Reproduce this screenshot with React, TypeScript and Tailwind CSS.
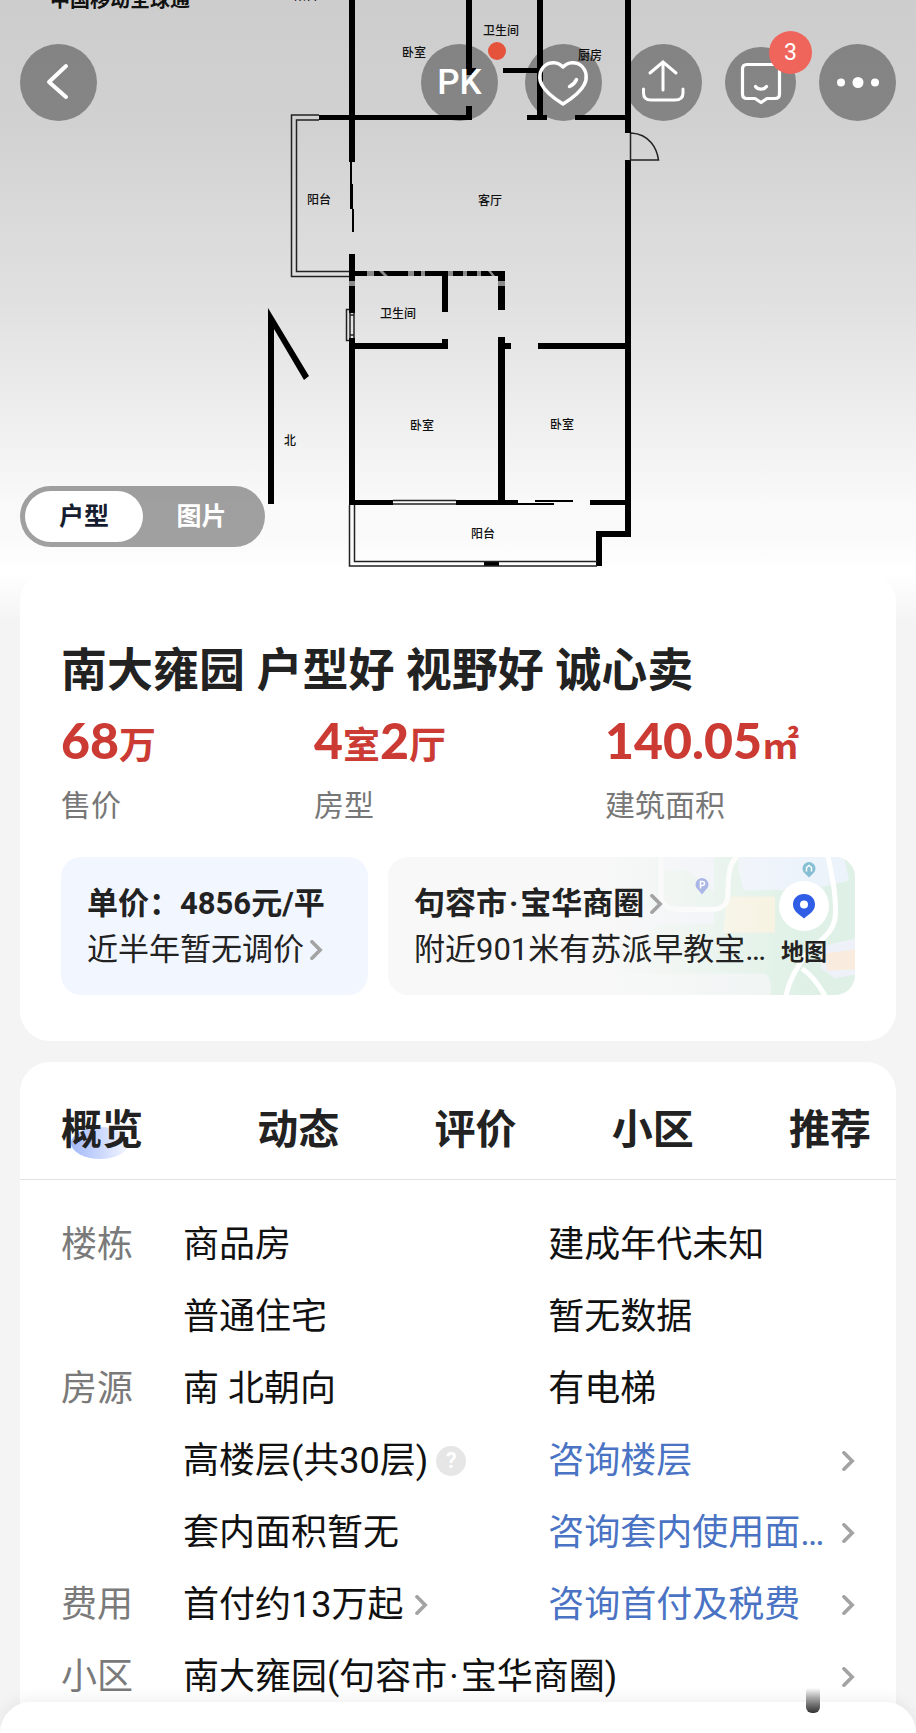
import type { ReactNode } from 'react';

const STATS = [
  { label: '售价', parts: ['68', '万'] },
  { label: '房型', parts: ['4', '室', '2', '厅'] },
  { label: '建筑面积', parts: ['140.05', '㎡'] },
];

const TABS = ['概览', '动态', '评价', '小区', '推荐'];

const ROOM_LABELS = [
  { x: 306, y: 0, text: '阳台' },
  { x: 414, y: 57, text: '卧室' },
  { x: 501, y: 35, text: '卫生间' },
  { x: 590, y: 60, text: '厨房' },
  { x: 319, y: 204, text: '阳台' },
  { x: 490, y: 205, text: '客厅' },
  { x: 398, y: 318, text: '卫生间' },
  { x: 422, y: 430, text: '卧室' },
  { x: 562, y: 429, text: '卧室' },
  { x: 483, y: 538, text: '阳台' },
  { x: 290, y: 445, text: '北' },
];

function Chevron() {
  return (
    <svg viewBox="0 0 14 22" className="w-[13px] h-5 shrink-0" fill="none" stroke="#a3a3a3" strokeWidth="4">
      <path d="M2 2l9 9-9 9" strokeLinecap="round" />
    </svg>
  );
}

function RoundButton({ label, children }: { label: string; children: ReactNode }) {
  return (
    <button aria-label={label} className="relative w-[77px] h-[77px] shrink-0 rounded-full bg-black/36 text-white">
      {children}
    </button>
  );
}

function FloorPlan() {
  return (
    <svg viewBox="0 0 916 572" className="block w-full" role="img" aria-label="户型图">
      {/* solid walls */}
      <path
        d="M349 0h6v162h-6z M349 254h6v59h-6z M349 338h6v167h-6z
           M319 115h153v5H319z M466 0h6v75h-6z M466 68h10v5h-10z M466 106h6v14h-6z
           M537 0h6v120h-6z M503 68h36v5h-36z M527 115h20v5h-20z M575 115h52v5h-52z
           M625 0h6v133h-6z M625 160h6v377h-6z
           M350 271h155v5H350z M442 271h6v41h-6z M442 339h6v10h-6z M354 343h94v6h-94z
           M498 271h7v39h-7z M498 337h7v168h-7z M504 343h7v6h-7z M538 343h88v6h-88z
           M349 500h44v5h-44z M456 500h62v5h-62z M518 503h36v2h-36z M535 500h38v2h-38z
           M590 500h36v5h-36z M596 531h35v6h-35z M596 531h6v35h-6z M484 561h15v5h-15z
           M350 162h2v22h-2z M350 184h3v25h-3z M352 209h2v23h-2z
           M268 308L309 376L304 380L274 329V504H268z"
      />
      {/* windows, balconies and the entrance door */}
      <g fill="none" stroke="#222" strokeWidth="1.500">
        <path d="M349 276.500H291.500V115H319 M349 271.500H296.500V120H319" />
        <path d="M349.500 505V566H597 M354.500 505V561.500H597" />
        <path d="M393 500.500h63 M393 504h63" />
        <path d="M349 309.500h-2.500v31h2.500 M350 313v25 M354 313v25 M350 315h4 M350 335h4" />
        <path d="M630.500 133V160H658.500C657 149 650 134 631 133" />
      </g>
      {/* worn spots of the watermark over the bathroom wall */}
      <path d="M367 271h7v5h-7z M379 271l4 0 5 5h-4z M408 271h6v5h-6z M421 271h4v5h-4z M448 271h5v5h-5z M463 271h4v5h-4z M477 271h4v5h-4z M488 271h3l4 5h-3z M349 281h6v5h-6z M498 281h7v5h-7z" fill="#8a8a8a" />
      <g fontSize="12" fontWeight="500" textAnchor="middle" fill="#111">
        {ROOM_LABELS.map(room => (
          <text key={`${room.x}-${room.y}`} x={room.x} y={room.y}>
            {room.text}
          </text>
        ))}
      </g>
    </svg>
  );
}

function Toolbar() {
  return (
    <div className="absolute inset-x-0 top-11 px-5 flex items-center justify-between">
      <RoundButton label="返回">
        <svg viewBox="0 0 77 77" fill="none" stroke="white" strokeWidth="4" strokeLinecap="round" strokeLinejoin="round">
          <path d="M46 22L29 38L46 53" />
        </svg>
      </RoundButton>

      <div className="flex items-center gap-[23px]">
        <div className="relative mr-1">
          <RoundButton label="对比">
            <span className="text-[35px] leading-[77px] font-medium">PK</span>
          </RoundButton>
          <span className="absolute -right-2 -top-0.5 w-[18px] h-[18px] rounded-full bg-[#e5533b]" />
        </div>
        <RoundButton label="收藏">
          <svg viewBox="0 0 77 77" fill="none" stroke="white" strokeWidth="3.500" strokeLinecap="round" strokeLinejoin="round">
            <path d="M38 23C33 17.500 25 17.500 20 21.500C14 26.500 13.500 35 17 41C21 49 30 55 38 60C46 55 55 49 59 41C62.500 35 62 26.500 56 21.500C51 17.500 43 17.500 38 23Z" />
            <path d="M44.500 42.500C48 41 50 39 51.500 35.500" />
          </svg>
        </RoundButton>
        <RoundButton label="分享">
          <svg viewBox="0 0 77 77" fill="none" stroke="white" strokeWidth="3" strokeLinecap="round">
            <path d="M38 46V19M25 29L38 18L51 29" />
            <path d="M18.500 45V49C18.500 53.500 21 56 26 56H50C55 56 58 53.500 58 49V45" />
          </svg>
        </RoundButton>
        <button aria-label="消息" className="relative w-[71px] h-[71px] rounded-full bg-black/36">
          <svg viewBox="0 0 71 71" fill="none" stroke="white" strokeWidth="3.200" strokeLinecap="round" strokeLinejoin="round">
            <path d="M22 17.500H50C53 17.500 54.500 19.500 54.500 22V47C54.500 50 53 51.500 50 51.500H42L36 55.500L30 51.500H22C19 51.500 17.500 50 17.500 47V22C17.500 19.500 19 17.500 22 17.500Z" />
            <path d="M30.500 39.500C33 43 39 43 41.500 39.500" />
          </svg>
          <span className="absolute -right-4 -top-4 w-[43px] h-[43px] rounded-full bg-[#ef655c] text-white text-[23px] leading-[43px]">
            3
          </span>
        </button>
        <RoundButton label="更多">
          <svg viewBox="0 0 77 77" fill="white">
            <circle cx="22" cy="38.500" r="4" />
            <circle cx="39" cy="38.500" r="5.500" />
            <circle cx="56" cy="38.500" r="4" />
          </svg>
        </RoundButton>
      </div>
    </div>
  );
}

function Hero() {
  return (
    <section className="relative overflow-hidden bg-[linear-gradient(to_bottom,#cdcdcd,#d1d1d1_22%,#dadada_38%,#e0e0e0_52%,#ebebeb_68%,#f3f3f3_80%,#f9f9f9_88%,#fafafa_94%,#fff)]">
      <FloorPlan />
      <p className="absolute left-[50px] -top-3 text-[20px] leading-6 font-bold text-[#111]">中国移动全球通</p>
      <Toolbar />
      <div className="absolute left-5 bottom-[25px] flex h-[61px] w-[245px] items-center rounded-full bg-black/36 p-[5px] text-[25px] font-bold">
        <button className="h-[51px] w-[118px] rounded-full bg-white text-[#161d30]">户型</button>
        <button className="h-[51px] flex-1 text-white">图片</button>
      </div>
    </section>
  );
}

function MapArt() {
  return (
    <svg
      viewBox="0 0 256 139"
      preserveAspectRatio="xMaxYMid slice"
      className="absolute right-0 top-0 h-full w-[256px]"
      aria-hidden="true"
    >
      <defs>
        <linearGradient id="mapFade">
          <stop offset="0" stopColor="#f8f8f8" />
          <stop offset="0.300" stopColor="#f8f8f8" stopOpacity="0.700" />
          <stop offset="0.800" stopColor="#f8f8f8" stopOpacity="0" />
        </linearGradient>
      </defs>
      <rect width="256" height="139" fill="#dff1e6" />
      <path d="M65 0H115V36L88 14H65z" fill="#eef1f8" />
      <path d="M0 50H60H115V68H60L40 80H0z" fill="#eef1f8" />
      <path d="M140 0H245L250 24L212 33L145 34C141 20 138 12 140 0z" fill="#edf3fb" />
      <path d="M128 40H176V76H124z" fill="#f7f2de" />
      <path d="M0 117H165C172 119 172 128 172 139H0z" fill="#eef4f3" />
      <path d="M222 90L256 82V118L236 122L222 112z" fill="#eef1f8" />
      <path d="M226 97L256 93V113L228 114z" fill="#f9ecdf" />
      <g fill="none" stroke="white" strokeWidth="5">
        <path d="M62 0V42C66 53 75 53 85 53H112C124 53 129 48 129 36C129 20 130 7 138 0" />
        <path d="M229 0C233 20 238 40 236 62C233 78 220 84 208 97C198 110 190 124 187 139" />
        <path d="M203 112C212 118 219 127 226 139" />
      </g>
      <rect width="256" height="139" fill="url(#mapFade)" />
      <circle cx="103" cy="28" r="6.500" fill="#aab6e6" />
      <path d="M99 33h8l-4 5z" fill="#aab6e6" />
      <path d="M101.500 32v-7h2a2 2 0 010 4h-2" fill="none" stroke="white" strokeWidth="1.500" />
      <circle cx="210" cy="12" r="6.500" fill="#86bfd4" />
      <path d="M206 17h8l-4 4z" fill="#86bfd4" />
      <path d="M207.500 15v-4l2.500-2 2.500 2v4" fill="none" stroke="white" strokeWidth="1.500" />
    </svg>
  );
}

function ListingCard() {
  return (
    <section className="rounded-[30px] bg-white px-[41px] pt-[66px] pb-[46px]">
      <h1 className="text-[46px] leading-[64px] font-bold text-[#222]">南大雍园 户型好 视野好 诚心卖</h1>

      <dl className="mt-1.5 grid grid-cols-[253fr_291fr_250fr]">
        {STATS.map(stat => (
          <div key={stat.label} className="flex flex-col-reverse">
            <dt className="mt-1.5 text-[30px] leading-[42px] text-[#777]">{stat.label}</dt>
            <dd className="flex items-baseline leading-[64px] text-[#cb3b33]">
              {stat.parts.map(part =>
                /\d/.test(part) ? (
                  <span key={part} className="font-[Lato] text-[50px] font-black">{part}</span>
                ) : (
                  <span key={part} className="text-[37px] font-bold">{part}</span>
                ),
              )}
            </dd>
          </div>
        ))}
      </dl>

      <div className="mt-[30px] flex gap-5 text-[31px] leading-[46px] text-[#222]">
        <a href="#price" className="w-[307px] shrink-0 rounded-[20px] bg-[#f2f6fe] px-[26px] pt-6 pb-[22px]">
          <p className="font-bold whitespace-nowrap">单价：4856元/平</p>
          <p className="flex items-center gap-1.5 whitespace-nowrap">
            近半年暂无调价 <Chevron />
          </p>
        </a>
        <a href="#map" className="relative flex min-w-0 flex-1 overflow-hidden rounded-[20px] bg-[#f8f8f8] pl-[26px] pt-6 pb-[22px]">
          <MapArt />
          <div className="relative min-w-0 flex-1 whitespace-nowrap">
            <p className="flex items-center gap-1.5 font-bold">
              <span>句容市<span className="mx-0.5">·</span>宝华商圈</span>
              <Chevron />
            </p>
            <p>附近901米有苏派早教宝…</p>
          </div>
          <div className="relative mr-[26px] flex w-[50px] flex-col items-center">
            <span className="flex h-[50px] w-[50px] items-center justify-center rounded-full bg-white">
              <svg viewBox="0 0 24 26" className="h-[26px] w-[24px]">
                <path d="M12 1C5.500 1 1 5.500 1 11.500C1 18 6.500 21 12 25.500C17.500 21 23 18 23 11.500C23 5.500 18.500 1 12 1Z" fill="#2f5de5" />
                <circle cx="12" cy="11.500" r="4" fill="white" />
              </svg>
            </span>
            <span className="mt-1.5 text-[23px] leading-8 font-bold whitespace-nowrap">地图</span>
          </div>
        </a>
      </div>
    </section>
  );
}

function AskLink({ children }: { children: ReactNode }) {
  return (
    <a href="#ask" className="flex items-center justify-between text-[#4a73c4]">
      {children}
      <Chevron />
    </a>
  );
}

function Details() {
  return (
    <section className="flex-1 rounded-t-[30px] bg-white">
      <nav className="flex justify-between border-b border-[#e2e2e2] pt-10 pb-5 pl-[41px] pr-[25px]">
        {TABS.map((tab, i) => (
          <a
            key={tab}
            href={`#tab-${i}`}
            className={`relative text-[41px] leading-[57px] font-bold text-[#222] ${i === 0 ? 'mr-[19px]' : ''}`}
          >
            {i === 0 && (
              <span className="absolute left-[10px] bottom-0 h-8 w-[58px] rounded-[50%] bg-linear-to-r from-[#a3b8f8] to-[#f4f7ff]" />
            )}
            <span className="relative">{tab}</span>
          </a>
        ))}
      </nav>

      <div className="pt-[29px] pb-6 px-[41px]">
        <table className="w-full table-fixed text-left text-[36px] leading-[50px] text-[#111] [&_td]:h-[72px] [&_td]:whitespace-nowrap [&_th]:h-[72px] [&_th]:font-normal [&_th]:text-[#7a7a7a]">
          <colgroup>
            <col className="w-[122px]" />
            <col className="w-[46%]" />
            <col />
          </colgroup>
          <tbody>
            <tr>
              <th scope="row">楼栋</th>
              <td>商品房</td>
              <td>建成年代未知</td>
            </tr>
            <tr>
              <th />
              <td>普通住宅</td>
              <td>暂无数据</td>
            </tr>
            <tr>
              <th scope="row">房源</th>
              <td>南 北朝向</td>
              <td>有电梯</td>
            </tr>
            <tr>
              <th />
              <td>
                <div className="flex items-center gap-2">
                  高楼层(共30层)
                  <button aria-label="楼层说明" className="h-[30px] w-[30px] rounded-full bg-[#e6e6e6] text-[22px] leading-[30px] font-bold text-white">
                    ?
                  </button>
                </div>
              </td>
              <td><AskLink>咨询楼层</AskLink></td>
            </tr>
            <tr>
              <th />
              <td>套内面积暂无</td>
              <td><AskLink>咨询套内使用面…</AskLink></td>
            </tr>
            <tr>
              <th scope="row">费用</th>
              <td>
                <a href="#payment" className="flex items-center gap-3">
                  首付约13万起 <Chevron />
                </a>
              </td>
              <td><AskLink>咨询首付及税费</AskLink></td>
            </tr>
            <tr>
              <th scope="row">小区</th>
              <td colSpan={2}>
                <a href="#community" className="flex items-center justify-between">
                  <span>南大雍园(句容市<span className="mx-0.5">·</span>宝华商圈)</span>
                  <Chevron />
                </a>
              </td>
            </tr>
          </tbody>
        </table>
      </div>
    </section>
  );
}

export default function App() {
  return (
    <main lang="zh-CN" className="flex min-h-screen flex-col bg-[#f4f4f4] font-[Roboto,'Noto_Sans_CJK_SC',sans-serif]">
      <Hero />
      <div className="flex flex-1 flex-col gap-[21px] bg-[linear-gradient(to_bottom,#fff,#f4f4f4_50px)] px-5">
        <ListingCard />
        <Details />
      </div>

      {/* top edge of the contact sheet */}
      <div className="fixed inset-x-0 bottom-0 h-[31px] rounded-t-[50px] bg-white shadow-[0_-2px_16px_rgba(0,0,0,0.07)]">
        <span className="absolute right-24 -top-[14px] h-[25px] w-[14px] rounded-b-md bg-linear-to-b from-white to-[#333]" />
      </div>
    </main>
  );
}
